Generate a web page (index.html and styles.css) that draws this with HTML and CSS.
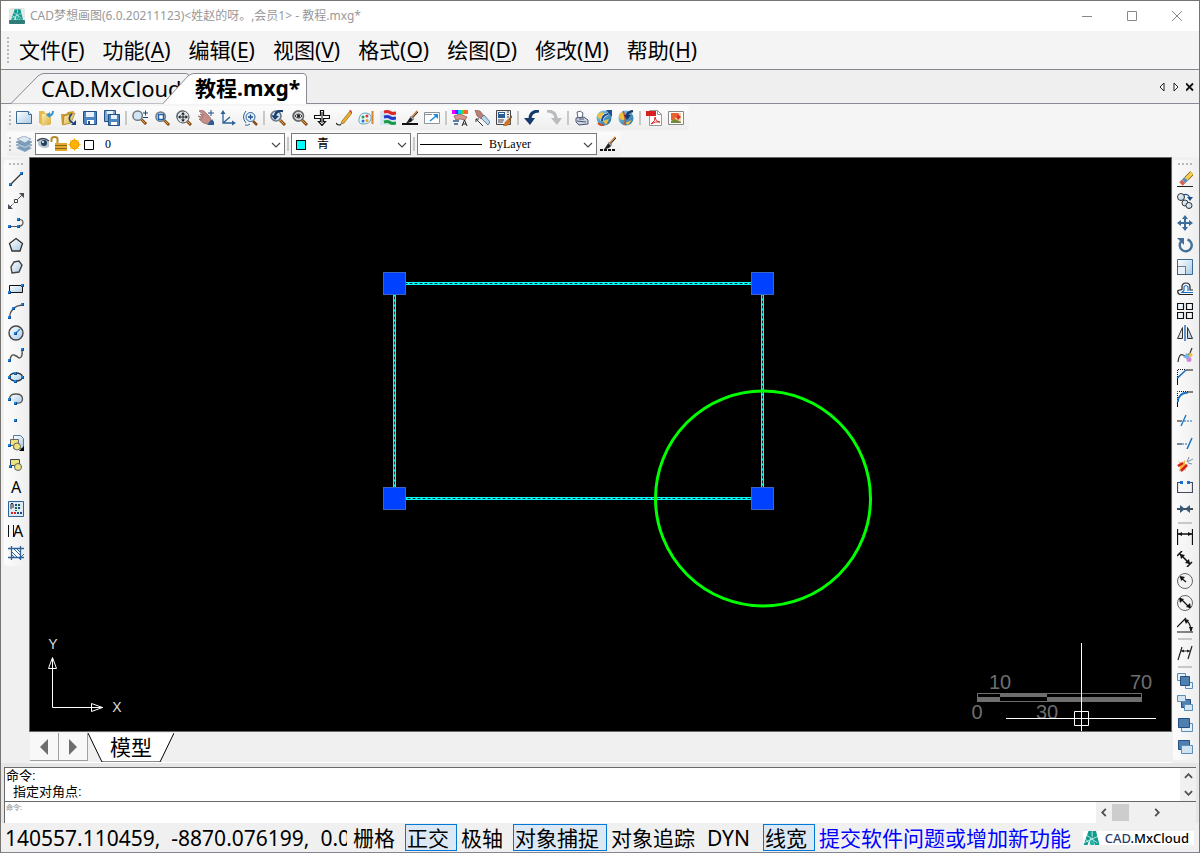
FILE: index.html
```html
<!DOCTYPE html>
<html lang="zh-CN">
<head>
    <meta charset="UTF-8">
    <meta name="viewport" content="width=device-width, initial-scale=1.0">
    <title>CAD梦想画图</title>
    <link rel="stylesheet" href="styles.css">
</head>
<body>
    <!-- shared shapes and gradients -->
    <svg class="sprite" aria-hidden="true">
        <defs>
            <linearGradient id="sky" x1="0" y1="0" x2="1" y2="1">
                <stop offset="0" stop-color="#ffffff"/>
                <stop offset="1" stop-color="#a9cbe6"/>
            </linearGradient>
            <linearGradient id="globe" x1="0" y1="0" x2="1" y2="1">
                <stop offset="0" stop-color="#8fd0ee"/>
                <stop offset="1" stop-color="#1c6a9c"/>
            </linearGradient>
            <linearGradient id="gold" x1="0" y1="0" x2="1" y2="1">
                <stop offset="0" stop-color="#fdf0b0"/>
                <stop offset="1" stop-color="#d9a93c"/>
            </linearGradient>
        </defs>
        <symbol id="lens" viewBox="0 0 16 16">
            <path d="M10 10l5 5" stroke="#8a4b14" stroke-width="3"/>
            <path d="M10 10l4 4" stroke="#e0a050" stroke-width="1"/>
            <circle cx="6" cy="6" r="5" fill="#d3e4f2" stroke="#6c7884" stroke-width="1.6"/>
        </symbol>
        <symbol id="brush" viewBox="0 0 16 16">
            <path d="M15.500 1L10 7" stroke="#c98a4c" stroke-width="2"/>
            <path d="M16 2L10.500 8" stroke="#222" stroke-width="1"/>
            <path d="M9 6l3 3-3 3-5 1.500z" fill="#222"/>
            <path d="M8.500 6.500l3 3" stroke="#aaa" stroke-width="1.500"/>
        </symbol>
        <symbol id="dot" viewBox="0 0 3 3">
            <rect width="3" height="3" fill="#0a4f98"/>
            <rect width="2" height="2" fill="#1b87e0"/>
        </symbol>
        <symbol id="logo" viewBox="0 0 16 14">
            <path d="M5 0h3.500l-1 6-3.500 8H0z" fill="#0e9c8f"/>
            <path d="M9 0h3.500L16 14h-4.500L9 7z" fill="#0e9c8f"/>
            <path d="M8 2l3 12H6z" fill="#26b3a4"/>
            <path d="M0 12L15 5M3 4l11 8M2 8l5 6" fill="none" stroke="#fff" stroke-width=".7"/>
        </symbol>
        <symbol id="chevron" viewBox="0 0 10 6">
            <path d="M1 1l4 4 4-4" fill="none" stroke="#444" stroke-width="1.100"/>
        </symbol>
    </svg>

    <div class="window">
        <header class="titlebar">
            <svg class="app-icon" viewBox="0 0 16 16">
                <rect width="16" height="16" rx="2" fill="#e3e7e6"/>
                <rect y="12" width="16" height="4" rx="1" fill="#2f7d78"/>
                <use href="#logo" x="2" y="1" width="12" height="11"/>
            </svg>
            <h1>CAD梦想画图(6.0.20211123)&lt;姓赵的呀。,会员1&gt; - 教程.mxg*</h1>
            <div class="win-buttons">
                <button aria-label="最小化"><svg viewBox="0 0 12 12"><path d="M1 6.500h10"/></svg></button>
                <button aria-label="最大化"><svg viewBox="0 0 12 12"><path d="M1.500 1.500h9v9h-9z"/></svg></button>
                <button aria-label="关闭"><svg viewBox="0 0 12 12"><path d="M1 1l10 10M11 1L1 11"/></svg></button>
            </div>
        </header>

        <nav class="menubar">
            <span class="grip grip-tall"></span>
            <button>文件(<u>F</u>)</button>
            <button>功能(<u>A</u>)</button>
            <button>编辑(<u>E</u>)</button>
            <button>视图(<u>V</u>)</button>
            <button>格式(<u>O</u>)</button>
            <button>绘图(<u>D</u>)</button>
            <button>修改(<u>M</u>)</button>
            <button>帮助(<u>H</u>)</button>
        </nav>

        <div class="tabs">
            <button class="tab tab-cloud">
                <svg viewBox="0 0 178 34"><path d="M0 33.500L27 6q3-2.500 6-2.500h142q3 0 3 3v27" fill="#f3f3f3" stroke="#8a8a94"/></svg>
                <span>CAD.MxCloud</span>
            </button>
            <button class="tab tab-active">
                <svg viewBox="0 0 144 34"><path d="M0 33.500L25 6q3-2.500 6-2.500h109q3 0 3.500 3v27" fill="#fff" stroke="#8a8a94"/><path d="M1 33.500h142" stroke="#fff"/></svg>
                <span>教程.mxg*</span>
            </button>
            <div class="tab-nav">
                <button aria-label="上一个"><svg viewBox="0 0 8 10"><path d="M6 1L2 5l4 4z" fill="#fff" stroke="#222"/></svg></button>
                <button aria-label="下一个"><svg viewBox="0 0 8 10"><path d="M2 1l4 4-4 4z" fill="#fff" stroke="#222"/></svg></button>
                <button aria-label="关闭标签"><svg viewBox="0 0 8 10"><path d="M0 1.500l7 7M7 1.500l-7 7" stroke="#111" stroke-width="1.800"/></svg></button>
            </div>
        </div>

        <div class="toolbars">
            <div class="toolbar">
                <span class="grip"></span>
                <button class="tool" aria-label="新建"><svg viewBox="0 0 16 16"><path d="M.500 1.500h12l3 3v9H.500z" fill="url(#sky)" stroke="#3c6a92"/><path d="M12.500 1.500v3h3" fill="#fff" stroke="#3c6a92"/></svg></button>
                <button class="tool" aria-label="打开"><svg viewBox="0 0 16 16"><path d="M1 1h5l1 2h5v12H4l-3-2z" fill="#e9b94e"/><path d="M4 4l9-1v11l-9 2z" fill="url(#gold)"/><path d="M15 1q0 4-4 5" fill="none" stroke="#2e9adf" stroke-width="2"/><path d="M8 5l4-3v6z" fill="#2e9adf"/></svg></button>
                <button class="tool" aria-label="打开云图"><svg viewBox="0 0 16 16"><path d="M1 4h5l2-2 6-1-3 12-9 2z" fill="#c99a2e"/><path d="M4 6l11-3-4 10-8 2z" fill="url(#gold)" stroke="#9b7420" stroke-width=".6"/><path d="M12 4q-4 3-2 7l3 2" fill="none" stroke="#1e4478" stroke-width="1.600"/><path d="M11 15h5v-5z" fill="#1e4478"/></svg></button>
                <button class="tool" aria-label="保存"><svg viewBox="0 0 16 16"><path d="M1.500 1.500h13v13h-12l-1-1z" fill="#4c86c0" stroke="#234f86"/><path d="M4 2h8v5H4z" fill="#e8f1f9"/><path d="M5 10h7v4H5z" fill="#fff"/><path d="M6 11h2v3H6z" fill="#234f86"/></svg></button>
                <button class="tool" aria-label="另存为"><svg viewBox="0 0 16 16"><path d="M.500.500h11v11H.500z" fill="#7ea8d2" stroke="#234f86"/><path d="M3 1h6v3H3z" fill="#e8f1f9"/><path d="M4.500 4.500h11v11h-11z" fill="#4c86c0" stroke="#234f86"/><path d="M7 5h6v4H7z" fill="#e8f1f9"/><path d="M7 12h6v3H7z" fill="#fff"/></svg></button>
                <span class="sep"></span>
                <button class="tool" aria-label="缩放"><svg viewBox="0 0 16 16"><use href="#lens" width="15" height="15"/><path d="M11 3h5M13.500.500v5M11 7.500h5" stroke="#1e4478"/></svg></button>
                <button class="tool" aria-label="窗口缩放"><svg viewBox="0 0 16 16"><use href="#lens" x="1" y="1" width="15" height="15"/><path d="M4.500 4.500h5v5h-5z" fill="#fff" stroke="#1f5fa8" stroke-width="1.500"/></svg></button>
                <button class="tool" aria-label="范围缩放"><svg viewBox="0 0 16 16"><use href="#lens" width="16" height="16"/><circle cx="7" cy="7" r="6" fill="#e3e8ec" stroke="#555"/><path d="M7 2l2 2.500H5zM7 12l2-2.500H5zM2 7l2.500-2v4zM12 7L9.500 5v4z" fill="#222"/><path d="M7 3v8M3 7h8" stroke="#222"/></svg></button>
                <button class="tool" aria-label="平移"><svg viewBox="0 0 16 16"><path d="M1 1l5 4-4-1 3 3-5-1 4 3-3 0q4 5 8 5l4-3q0-4-3-6l-4-4-3-1z" fill="#c58d8a" stroke="#8a5a5a" stroke-width=".6"/><path d="M9 15l5-6 2 3v3z" fill="#2d5c92"/><path d="M13 0v6M10 3h6" stroke="#234f86"/></svg></button>
                <button class="tool" aria-label="坐标系"><svg viewBox="0 0 16 16"><path d="M3 2v11h11M3 13l7-6" fill="none" stroke="#2d6399" stroke-width="1.300"/><path d="M3 0l2.500 4h-5zM16 13l-4 2.500v-5z" fill="#2d6399"/></svg></button>
                <button class="tool" aria-label="实时缩放"><svg viewBox="0 0 16 16"><path d="M11 11l4 4" stroke="#8a4b14" stroke-width="2.500"/><circle cx="8.500" cy="7" r="4.500" fill="#e4f0fa" stroke="#2d6399"/><path d="M6 7h5M8.500 4.500v5" stroke="#234f86" stroke-width="1.300"/><path d="M4 1q-5 6 0 12M3 15q3 1 5-1" fill="none" stroke="#2d6399"/></svg></button>
                <span class="sep"></span>
                <button class="tool" aria-label="上一视图"><svg viewBox="0 0 16 16"><use href="#lens" width="16" height="16"/><path d="M13 1q-7-1-8 5" fill="none" stroke="#1e3f70" stroke-width="2.500"/><path d="M1 5l8 1-4 4z" fill="#1e3f70"/></svg></button>
                <button class="tool" aria-label="查看"><svg viewBox="0 0 16 16"><use href="#lens" width="16" height="16"/><circle cx="6.500" cy="6" r="5" fill="#d9dcdd" stroke="#666" stroke-width="1.500"/><path d="M3 6q3.500-4 7 0-3.500 4-7 0z" fill="#fff" stroke="#333"/><circle cx="6.500" cy="6" r="1.500" fill="#111"/></svg></button>
                <button class="tool" aria-label="移动视图"><svg viewBox="0 0 16 16"><path d="M6.500.500h3v5h6v3h-6v3h2l-3.500 4-3.500-4h2v-3h-6v-3h6z" fill="#fff" stroke="#111" stroke-width="1.200"/><path d="M8 2v11" stroke="#111"/></svg></button>
                <button class="tool" aria-label="草图"><svg viewBox="0 0 16 16"><path d="M0 13q2 3 5 1.500" fill="none" stroke="#222" stroke-width="1.200"/><path d="M14 1l2 2-8 10-3 1 1-3z" fill="#edb02f" stroke="#8c5d12" stroke-width=".7"/><path d="M14 0l2 3" stroke="#c44" stroke-width="1.500"/></svg></button>
                <button class="tool" aria-label="调色板"><svg viewBox="0 0 16 16"><path d="M7 3q7 0 6 6-1 5-8 5-5 0-4-5 1-6 6-6z" fill="#e9f5fc" stroke="#5ba7cf"/><circle cx="5" cy="7" r="1.500" fill="#2c9c44"/><circle cx="9" cy="6" r="1.500" fill="#e03030"/><circle cx="5" cy="11" r="1.500" fill="#2b6fd1"/><circle cx="9" cy="10.500" r="1.500" fill="#e7a321"/><path d="M14.500 1v13" stroke="#d9822c" stroke-width="2"/></svg></button>
                <button class="tool" aria-label="图层颜色"><svg viewBox="0 0 16 16"><path d="M0 1h16v14H0z" fill="#d5e6f2"/><path d="M4 2q4-1 6 .500t6 .500" fill="none" stroke="#e02525" stroke-width="3"/><path d="M4 7q4-1 6 .500t6 .500" fill="none" stroke="#2438c4" stroke-width="3"/><path d="M4 12q4-1 6 .500t6 .500" fill="none" stroke="#189a46" stroke-width="3"/></svg></button>
                <button class="tool" aria-label="画笔"><svg viewBox="0 0 16 16"><use href="#brush" width="16" height="16"/><path d="M0 14h16" stroke="#111" stroke-width="2"/></svg></button>
                <button class="tool" aria-label="全屏"><svg viewBox="0 0 16 16"><path d="M.500 2.500h15v11H.500z" fill="#fff" stroke="#8e9499"/><path d="M0 4.500h8" stroke="#8e9499"/><path d="M6 11l6-5" stroke="#1b8be0" stroke-width="1.500"/><path d="M14 4v5L9 4z" fill="#1b8be0"/></svg></button>
                <span class="sep"></span>
                <button class="tool" aria-label="颜色拾取"><svg viewBox="0 0 16 16"><path d="M0 0h3v4H0z" fill="#e0f"/><path d="M3 0h3v4H3z" fill="#33f"/><path d="M6 0h3v4H6z" fill="#0cf"/><path d="M9 0h3v4H9z" fill="#4d2"/><path d="M12 0h4v4h-4z" fill="#f62"/><path d="M2 6l6-2 7 3-2 3-5-1-4 1z" fill="#d49a90" stroke="#8a5047" stroke-width=".7"/><path d="M1 10h6v2H1zM2 13h4v2H2z" fill="#5c7ea4"/><path d="M10 16l2.500-6L15 16M11 14h3" fill="none" stroke="#222"/></svg></button>
                <button class="tool" aria-label="编辑文字"><svg viewBox="0 0 16 16"><path d="M1 0l5 1 4 5-3 3-4-3z" fill="#b98078" stroke="#7a4b45" stroke-width=".6"/><path d="M7 8l3-3 6 7-2 3z" fill="#bcd8ee" stroke="#44688c" stroke-width=".8"/><path d="M2 9l7 7M2 9h3M2 9v3" fill="none" stroke="#333"/></svg></button>
                <button class="tool" aria-label="特性"><svg viewBox="0 0 16 16"><path d="M.500.500h14v14H.500z" fill="#eee" stroke="#444"/><path d="M2 2h7v6H2z" fill="#2c5c94"/><path d="M3 3h5v1H3z" fill="#fff"/><path d="M11 2h2M11 4.500h2M11 7h2M2 10h6M2 12h5" stroke="#445"/><path d="M16 6l-4 5" stroke="#9a5b22" stroke-width="2"/><path d="M12 9l3 3-4 4H7q2-5 5-7z" fill="#c6752c"/></svg></button>
                <span class="sep"></span>
                <button class="tool" aria-label="撤销"><svg viewBox="0 0 16 16"><path d="M15 1Q6 1 6 9" fill="none" stroke="#173a6c" stroke-width="3"/><path d="M0 8h11l-5 7z" fill="#173a6c"/></svg></button>
                <button class="tool" aria-label="重做"><svg viewBox="0 0 16 16"><path d="M1 1q9 0 9 8" fill="none" stroke="#b9bcbf" stroke-width="3"/><path d="M16 8H5l6 7z" fill="#b9bcbf"/></svg></button>
                <span class="sep"></span>
                <button class="tool" aria-label="打印"><svg viewBox="0 0 16 16"><path d="M3 2q4-2 6 1l-1 5H4z" fill="#fff" stroke="#59627f"/><path d="M2 8l8-1 4 3v4l-9 1-3-3z" fill="#ccd2e2" stroke="#4c5673"/><path d="M3 11l9 1M5 9h5" stroke="#4c5673"/></svg></button>
                <button class="tool" aria-label="上传"><svg viewBox="0 0 16 16"><circle cx="8" cy="8" r="7.500" fill="url(#globe)"/><path d="M1 5q5-5 7-1T3 9zM7 11l6-2-3 6z" fill="#f0c040"/><path d="M2 13q3 3 6 2" stroke="#d34b2a" stroke-width="2" fill="none"/><path d="M6 11q0-6 6-7" fill="none" stroke="#fff" stroke-width="3"/><path d="M6 11q0-6 6-7" fill="none" stroke="#1d4c8a" stroke-width="2"/><path d="M10 0h6v7z" fill="#1d4c8a"/></svg></button>
                <button class="tool" aria-label="下载"><svg viewBox="0 0 16 16"><circle cx="8" cy="8" r="7.500" fill="url(#globe)"/><path d="M1 4q5-4 6 2T2 9zM7 13l7-3-4 5z" fill="#f0c040"/><path d="M5 1q3 6 2 14" stroke="#d34b2a" stroke-width="1.500" fill="none"/><path d="M15 1q-6 1-6 5" fill="none" stroke="#173a6c" stroke-width="2.500"/><path d="M6 5h7l-4 5z" fill="#173a6c"/></svg></button>
                <span class="sep"></span>
                <button class="tool" aria-label="导出PDF"><svg viewBox="0 0 16 16"><path d="M3.500.500h8l4 4v11h-12z" fill="#fff" stroke="#999"/><path d="M11.500.500v4h4" fill="none" stroke="#999"/><path d="M0 1h10v5H0z" fill="#d92020"/><path d="M5 14q5-3 4-7 1 5 5 5-5-1-9 2z" fill="none" stroke="#d92020"/></svg></button>
                <button class="tool" aria-label="导出图片"><svg viewBox="0 0 16 16"><path d="M.500 1.500h15v13H.500z" fill="#fff" stroke="#888"/><path d="M3 3h10v10H3z" fill="#f8cf9e"/><path d="M3 3h8l-5 7H3z" fill="#e8642c"/><path d="M10 4l3 3-3 3-2-3z" fill="#d92f2f"/><path d="M3 11l4-2 6 3v1H3z" fill="#6f8a3c"/></svg></button>
            </div>

            <div class="toolbar">
                <span class="grip"></span>
                <button class="tool" aria-label="图层"><svg viewBox="0 0 16 16"><path d="M0 12l8-3 8 3-7 4z" fill="#7f9fbd"/><path d="M0 9l8-3 8 3-7 4z" fill="#a6bfd6" stroke="#54789a" stroke-width=".5"/><path d="M0 6l8-3 8 3-7 4z" fill="#7f9fbd" stroke="#54789a" stroke-width=".5"/><path d="M1 3l7-3 7 3-6 4z" fill="#dbe7f1" stroke="#54789a" stroke-width=".5"/></svg></button>
                <div class="combo combo-layer">
                    <select aria-label="当前图层"><option>0</option></select>
                    <svg class="combo-icon" viewBox="0 0 58 16">
                        <path d="M1 4q6-3 11 1v6q-6 3-11-2z" fill="#b7c5d2"/>
                        <path d="M0 5q6-5 12 0" fill="none" stroke="#3d4b59" stroke-width="1.500"/>
                        <circle cx="7" cy="7" r="3" fill="#23405e"/><circle cx="6" cy="6" r="1" fill="#fff"/>
                        <path d="M14.500 6V3q0-2 3-2t3 2v6" fill="none" stroke="#b38a2a" stroke-width="2"/>
                        <path d="M18 7h12v8H18z" fill="#e0a92e"/><path d="M18 9.500h12M18 12.500h12" stroke="#8d6717"/>
                        <path d="M37.500 2v13M31 8.500h13M33 4l9 9M42 4l-9 9" stroke="#f7d548"/>
                        <circle cx="37.500" cy="8.500" r="4.500" fill="#ffb400" stroke="#f08c00"/>
                        <path d="M47.500 4.500h9v9h-9z" fill="#fff" stroke="#000"/>
                    </svg>
                    <svg class="combo-arrow" viewBox="0 0 10 6"><use href="#chevron"/></svg>
                </div>
                <span class="sep"></span>
                <div class="combo combo-color">
                    <select aria-label="颜色"><option>青</option></select>
                    <span class="swatch"></span>
                    <svg class="combo-arrow" viewBox="0 0 10 6"><use href="#chevron"/></svg>
                </div>
                <span class="sep"></span>
                <div class="combo combo-line">
                    <select aria-label="线型"><option>ByLayer</option></select>
                    <span class="line-sample"></span>
                    <svg class="combo-arrow" viewBox="0 0 10 6"><use href="#chevron"/></svg>
                </div>
                <button class="tool" aria-label="线型管理"><svg viewBox="0 0 16 16"><use href="#brush" width="16" height="16"/><path d="M0 14h16" stroke="#111" stroke-width="2" stroke-dasharray="3 1"/></svg></button>
            </div>
        </div>

        <main class="workspace">
            <aside class="dock dock-left">
                <div class="palette">
                    <span class="grip grip-flat"></span>
                    <button class="tool" aria-label="直线"><svg viewBox="0 0 16 16"><path d="M3 13L14 2" stroke="#333" stroke-width="1.300"/><use href="#dot" x="1" y="12" width="3" height="3"/><use href="#dot" x="12" y="1" width="3" height="3"/></svg></button>
                    <button class="tool" aria-label="构造线"><svg viewBox="0 0 16 16"><path d="M1 15L15 1" stroke="#444" stroke-dasharray="5 1.500"/><path d="M0 16v-5l5 5zM16 0v5l-5-5z" fill="#4a4a58"/><path d="M6.500 6.500h3v3h-3z" fill="#fff" stroke="#444"/></svg></button>
                    <button class="tool" aria-label="多段线"><svg viewBox="0 0 16 16"><path d="M1 11.500h10q4-1 4-4t-4-3" fill="none" stroke="#555" stroke-width="1.200"/><use href="#dot" x="0" y="10" width="3" height="3"/><use href="#dot" x="9" y="10" width="3" height="3"/><use href="#dot" x="9" y="3" width="3" height="3"/></svg></button>
                    <button class="tool" aria-label="正多边形"><svg viewBox="0 0 16 16"><path d="M8 1.500l6.500 5-2.500 7.500H4L1.500 6.500z" fill="url(#sky)" stroke="#333" stroke-width="1.300"/></svg></button>
                    <button class="tool" aria-label="多边形"><svg viewBox="0 0 16 16"><path d="M6 3l5-1 3 4-3 7-7 1-1-6z" fill="url(#sky)" stroke="#444" stroke-width="1.400"/></svg></button>
                    <button class="tool" aria-label="矩形"><svg viewBox="0 0 16 16"><path d="M1.500 4.500h13v7h-13z" fill="url(#sky)" stroke="#111"/><use href="#dot" x="0" y="10" width="3" height="3"/><use href="#dot" x="13" y="3" width="3" height="3"/></svg></button>
                    <button class="tool" aria-label="圆弧"><svg viewBox="0 0 16 16"><path d="M1.500 14Q3 3 14 2" fill="none" stroke="#555" stroke-width="1.300"/><use href="#dot" x="0" y="13" width="3" height="3"/><use href="#dot" x="4" y="4" width="3" height="3"/><use href="#dot" x="13" y="0" width="3" height="3"/></svg></button>
                    <button class="tool" aria-label="圆"><svg viewBox="0 0 16 16"><circle cx="8" cy="8" r="7" fill="url(#sky)" stroke="#444" stroke-width="1.400"/><path d="M8 8l4-4" stroke="#1b87e0" stroke-width="1.200"/><use href="#dot" x="6" y="7" width="3" height="3"/></svg></button>
                    <button class="tool" aria-label="样条曲线"><svg viewBox="0 0 16 16"><path d="M2 13q1-6 4-5t5 3q4 0 3-8" fill="none" stroke="#555" stroke-width="1.400"/><use href="#dot" x="0" y="12" width="3" height="3"/><use href="#dot" x="13" y="1" width="3" height="3"/></svg></button>
                    <button class="tool" aria-label="椭圆"><svg viewBox="0 0 16 16"><ellipse cx="8" cy="8" rx="6.500" ry="4" fill="url(#sky)" stroke="#333" stroke-width="1.300"/><use href="#dot" x="0" y="7" width="3" height="3"/><use href="#dot" x="13" y="7" width="3" height="3"/><use href="#dot" x="6" y="3" width="3" height="3"/><use href="#dot" x="6" y="11" width="3" height="3"/></svg></button>
                    <button class="tool" aria-label="椭圆弧"><svg viewBox="0 0 16 16"><path d="M1.500 8q0-5 6.500-5t6.500 5-6.500 4" fill="url(#sky)" stroke="#555" stroke-width="1.300"/><use href="#dot" x="0" y="7" width="3" height="3"/><use href="#dot" x="6" y="11" width="3" height="3"/></svg></button>
                    <button class="tool" aria-label="点"><svg viewBox="0 0 16 16"><use href="#dot" x="6" y="6" width="3" height="3"/></svg></button>
                    <button class="tool" aria-label="插入块"><svg viewBox="0 0 16 16"><path d="M5.500.500h7l3 3v10h-10z" fill="url(#sky)" stroke="#4f7aa3"/><path d="M2.500 4.500h8v6h-8z" fill="#efe27b" stroke="#666"/><circle cx="9" cy="11.500" r="3.500" fill="#efe27b" stroke="#666"/><use href="#dot" x="0" y="9" width="3" height="3"/><path d="M16 11v5h-5z" fill="#000"/></svg></button>
                    <button class="tool" aria-label="创建块"><svg viewBox="0 0 16 16"><path d="M2.500 2.500h9v6h-9z" fill="#efe27b" stroke="#345"/><circle cx="10" cy="10" r="3.500" fill="#efe27b" stroke="#567"/><use href="#dot" x="1" y="8" width="3" height="3"/></svg></button>
                    <button class="tool glyph" aria-label="单行文字">A</button>
                    <button class="tool" aria-label="图案"><svg viewBox="0 0 16 16"><path d="M.500.500h15v15H.500z" fill="#dceaf7" stroke="#2d6399"/><path d="M3 8V3q1-2 2 0v4" fill="none" stroke="#222"/><path d="M3 11h2v2H3zM6 11h2v2H6z" fill="#d22"/><path d="M7 3h2v2H7zM10 6h2v2h-2zM9 11h2v2H9zM12 11h2v2h-2z" fill="#248"/><path d="M7 6h2v2H7zM10 3h2v2h-2zM7 9h2v1H7z" fill="#186a2c"/></svg></button>
                    <button class="tool glyph glyph-bar" aria-label="多行文字">A</button>
                    <button class="tool" aria-label="填充"><svg viewBox="0 0 16 16"><path d="M4 4h9v9H4z" fill="#fff"/><path d="M4 7l6 6M4 10l3 3M6 4l7 7M9 4l4 4" stroke="#2d6399"/><path d="M3.500 1v14M12.500 1v14M0 3.500h16M0 12.500h16" stroke="#2d6399" stroke-width="1.300"/><path d="M16 9l-5 5" stroke="#2d6399"/></svg></button>
                </div>
            </aside>

            <section class="stage">
                <div class="canvas">
                    <svg class="drawing">
                        <g transform="translate(-30 -158)">
                            <path class="edge" d="M394.500 283.500h368v215h-368z"/>
                            <path class="edge-dash" d="M394.500 283.500h368v215h-368z"/>
                            <circle class="ring" cx="763" cy="498.500" r="107.500"/>
                            <g class="handle">
                                <rect x="383.500" y="272.500" width="22" height="22"/>
                                <rect x="751.500" y="272.500" width="22" height="22"/>
                                <rect x="383.500" y="487.500" width="22" height="22"/>
                                <rect x="751.500" y="487.500" width="22" height="22"/>
                            </g>
                            <g class="axis">
                                <path d="M52.500 658v49.500H103M48.500 668.500l4-11 4 11zM91.500 703.500l11 4-11 4z"/>
                                <text x="53" y="649">Y</text>
                                <text x="117" y="712">X</text>
                            </g>
                            <g class="scale">
                                <rect x="977.500" y="693.500" width="164" height="8"/>
                                <path d="M977 697h23v5h-23zM1000 693h47v4h-47zM1047 697h95v5h-95z"/>
                                <text x="1000" y="689">10</text>
                                <text x="1141" y="689">70</text>
                                <text x="977" y="719">0</text>
                                <text x="1047" y="719">30</text>
                            </g>
                            <path class="cursor" d="M1081.500 643v88M1006 718.500h150M1074.500 711.500h14v14h-14z"/>
                        </g>
                    </svg>
                </div>
                <div class="sheets">
                    <button class="sheet-nav" aria-label="上一页"><svg viewBox="0 0 8 16"><path d="M8 0v16L0 8z" fill="#6d6d6d"/></svg></button>
                    <button class="sheet-nav" aria-label="下一页"><svg viewBox="0 0 8 16"><path d="M0 0v16l8-8z" fill="#6d6d6d"/></svg></button>
                    <button class="sheet">
                        <svg viewBox="0 0 86 30"><path d="M0 0h86L72 28.500H14z" fill="#fff"/><path d="M14 28.500h58" stroke="#888"/><path d="M0 0l14 29M86 0L72 29" stroke="#000"/></svg>
                        <span>模型</span>
                    </button>
                </div>
            </section>

            <aside class="dock dock-right">
                <div class="palette">
                    <span class="grip grip-flat"></span>
                    <button class="tool" aria-label="删除"><svg viewBox="0 0 16 16"><path d="M0 15.500h16" stroke="#222"/><path d="M15 2L9 8" stroke="#7a5b12" stroke-width="5"/><path d="M15 2L9 8" stroke="#f5cf4c" stroke-width="3.500"/><path d="M9 8l-2.500 2.500" stroke="#5f8dbd" stroke-width="5"/><path d="M6.500 10.500L4 13" stroke="#d9604f" stroke-width="5"/></svg></button>
                    <button class="tool" aria-label="复制"><svg viewBox="0 0 16 16"><circle cx="4" cy="4" r="3.500" fill="url(#sky)" stroke="#333"/><circle cx="8" cy="10" r="3" fill="url(#sky)" stroke="#333"/><circle cx="12" cy="12.500" r="3" fill="url(#sky)" stroke="#333"/><path d="M6 2q5-2 7 3" fill="none" stroke="#1e4f8c" stroke-width="1.300"/><path d="M10 4h6l-3 4z" fill="#1e4f8c"/></svg></button>
                    <button class="tool" aria-label="移动"><svg viewBox="0 0 16 16"><path d="M8 2v12M2 8h12" stroke="#3d6d9c" stroke-width="2"/><path d="M8 0l3 4H5zM8 16l3-4H5zM0 8l4-3v6zM16 8l-4-3v6z" fill="#3d6d9c"/></svg></button>
                    <button class="tool" aria-label="旋转"><svg viewBox="0 0 16 16"><path d="M4.500 4a6 6 0 1 0 6-1.500" fill="none" stroke="#44709a" stroke-width="2.400"/><path d="M0 1h7v7z" fill="#44709a"/></svg></button>
                    <button class="tool" aria-label="缩放对象"><svg viewBox="0 0 16 16"><path d="M.500.500h15v15H.500z" fill="url(#sky)" stroke="#3c6a92"/><path d="M.500 7.500h8v8h-8z" fill="#e6f0f8" stroke="#111" stroke-dasharray="1 1"/></svg></button>
                    <button class="tool" aria-label="偏移"><svg viewBox="0 0 16 16"><path d="M16 13.500H3q-3-1-2-4l4-1V6q0-4 4-4t4 4v3h3" fill="#f4f9fd" stroke="#222" stroke-width="1.200"/><path d="M16 11.500H5l2-2V6q2-3 4 0v4" fill="none" stroke="#1b6fc0" stroke-width="1.200"/></svg></button>
                    <button class="tool" aria-label="阵列"><svg viewBox="0 0 16 16"><path d="M.500.500h6v6h-6zM9.500.500h6v6h-6zM.500 9.500h6v6h-6zM9.500 9.500h6v6h-6z" fill="#eef6fc" stroke="#111" stroke-width="1.200"/></svg></button>
                    <button class="tool" aria-label="镜像"><svg viewBox="0 0 16 16"><path d="M5.500 2.500v11H.500zM10.500 2.500v11h5z" fill="url(#sky)" stroke="#333"/><path d="M8 0v16" stroke="#2468b0" stroke-width="1.400"/></svg></button>
                    <button class="tool" aria-label="编辑曲线"><svg viewBox="0 0 16 16"><path d="M1 15q1-9 5-7t7-2l2-5" fill="none" stroke="#333" stroke-width="1.200"/><path d="M6 10l4-4 3 4-3 2z" fill="#6fb4e4"/><circle cx="13.500" cy="8" r="2" fill="#eebf3e"/><circle cx="12" cy="12.500" r="2.500" fill="#c98ad6"/></svg></button>
                    <button class="tool" aria-label="倒角"><svg viewBox="0 0 16 16"><path d="M.500 8V.500H9" fill="none" stroke="#111" stroke-dasharray="1 1"/><path d="M.500 16V9M9 1h7" stroke="#111"/><path d="M.500 9L9 1" stroke="#1b6fc0" stroke-width="1.600"/></svg></button>
                    <button class="tool" aria-label="圆角"><svg viewBox="0 0 16 16"><path d="M.500 9V.500H11" fill="none" stroke="#111" stroke-dasharray="1 1"/><path d="M.500 16v-5M11 1h5" stroke="#111"/><path d="M1 11Q1 2 11 1.500" fill="none" stroke="#1b6fc0" stroke-width="1.800"/></svg></button>
                    <button class="tool" aria-label="修剪"><svg viewBox="0 0 16 16"><path d="M0 8h5" stroke="#111"/><path d="M7 8h9" stroke="#1b6fc0" stroke-dasharray="2 1"/><path d="M4 13l5-11" stroke="#1b6fc0" stroke-width="1.300"/></svg></button>
                    <button class="tool" aria-label="延伸"><svg viewBox="0 0 16 16"><path d="M0 9h5" stroke="#111"/><path d="M5 9h6" stroke="#1b6fc0" stroke-dasharray="2 1"/><path d="M10 14l5-11" stroke="#1b6fc0" stroke-width="1.500"/></svg></button>
                    <button class="tool" aria-label="分解"><svg viewBox="0 0 16 16"><path d="M1 4l4 2 3-3v4l3 1-3 2 1 4-3-2-4 3 1-5-3-2 3-1z" fill="#f6b83c"/><path d="M1 9l5-3M4 14l6-6" stroke="#d22020" stroke-width="2.500"/><path d="M10 5l2-5M10 5l6-3M11 6l4 1" stroke="#7891a8"/></svg></button>
                    <button class="tool" aria-label="打断"><svg viewBox="0 0 16 16"><path d="M4 3.500H.500v10h15v-10H12" fill="none" stroke="#444a5c" stroke-width="1.200"/><path d="M3 2h3v3H3zM10 2h3v3h-3z" fill="#1673d4"/></svg></button>
                    <button class="tool" aria-label="合并"><svg viewBox="0 0 16 16"><path d="M0 8h16" stroke="#111" stroke-width="1.500"/><path d="M3 4l5 4-5 4zM13 4L8 8l5 4z" fill="#35597c"/></svg></button>
                    <span class="sep"></span>
                    <button class="tool" aria-label="线性标注"><svg viewBox="0 0 16 16"><path d="M.500 0v16M15.500 0v16M1 5h14" stroke="#111" stroke-width="1.300"/><path d="M1 5l4-2v4zM15 5l-4-2v4z" fill="#111"/></svg></button>
                    <button class="tool" aria-label="对齐标注"><svg viewBox="0 0 16 16"><path d="M0 5l5-5M10 16l5-5M3 3l10 10" stroke="#111" stroke-width="1.500"/><path d="M3 3l5 1-4 4zM13 13l-5-1 4-4z" fill="#111"/></svg></button>
                    <button class="tool" aria-label="半径标注"><svg viewBox="0 0 16 16"><circle cx="8" cy="8" r="7.500" fill="#f3f3f3" stroke="#666"/><path d="M3 4l6 5" stroke="#111" stroke-width="1.300"/><path d="M3 3l5 1-4 4z" fill="#111"/></svg></button>
                    <button class="tool" aria-label="直径标注"><svg viewBox="0 0 16 16"><circle cx="8" cy="8" r="7.500" fill="#f3f3f3" stroke="#666"/><path d="M3 3l10 10" stroke="#111" stroke-width="1.300"/><path d="M2 3l5 1-4 4zM14 13l-5-1 4-4z" fill="#111"/></svg></button>
                    <button class="tool" aria-label="角度标注"><svg viewBox="0 0 16 16"><path d="M0 10l9-9M0 15h16M9 3q5 4 5 11" fill="none" stroke="#111" stroke-width="1.200"/><path d="M7 2l5 1-3 4zM12 10h4l-2 5z" fill="#111"/></svg></button>
                    <span class="sep"></span>
                    <button class="tool" aria-label="倾斜标注"><svg viewBox="0 0 16 16"><path d="M1 15L5 2M11 14l4-13M4 6h9" stroke="#222" stroke-width="1.200"/><path d="M4 6l3-1.500v3zM13 6l-3-1.500v3z" fill="#222"/></svg></button>
                    <span class="sep"></span>
                    <button class="tool" aria-label="前置"><svg viewBox="0 0 16 16"><path d="M.500.500h8v7h-8zM8.500 9.500h7v6h-7z" fill="#e4f0f8" stroke="#5d8db5"/><path d="M3.500 3.500h9v9h-9z" fill="#4f7fae" stroke="#234f86"/></svg></button>
                    <button class="tool" aria-label="后置"><svg viewBox="0 0 16 16"><path d="M4.500 4.500h9v8h-9z" fill="#4f7fae" stroke="#234f86"/><path d="M.500.500h8v6h-8zM7.500 9.500h8v6h-8z" fill="#d3e5f1" stroke="#5d8db5"/></svg></button>
                    <button class="tool" aria-label="置于对象之上"><svg viewBox="0 0 16 16"><path d="M4.500 6.500h11v8h-11z" fill="#e4f0f8" stroke="#5d8db5"/><path d="M1.500 1.500h11v9h-11z" fill="#4f7fae" stroke="#234f86"/></svg></button>
                    <button class="tool" aria-label="置于对象之下"><svg viewBox="0 0 16 16"><path d="M1.500 1.500h11v9h-11z" fill="#4f7fae" stroke="#234f86"/><path d="M4.500 6.500h11v8h-11z" fill="#cfe3f0" stroke="#5d8db5"/></svg></button>
                </div>
            </aside>
        </main>

        <section class="command">
            <div class="history">
                <div class="log">
                    <p>命令:</p>
                    <p class="log-step">指定对角点:</p>
                </div>
                <div class="vscroll">
                    <button aria-label="向上滚动"><svg viewBox="0 0 10 6"><path d="M1 5l4-4 4 4"/></svg></button>
                    <button aria-label="向下滚动"><svg viewBox="0 0 10 6"><path d="M1 1l4 4 4-4"/></svg></button>
                </div>
            </div>
            <div class="prompt">
                <input type="text" value="命令:" aria-label="命令输入">
                <div class="hscroll">
                    <button aria-label="向左滚动"><svg viewBox="0 0 6 10"><path d="M5 1L1 5l4 4"/></svg></button>
                    <span class="thumb"></span>
                    <button aria-label="向右滚动"><svg viewBox="0 0 6 10"><path d="M1 1l4 4-4 4"/></svg></button>
                </div>
            </div>
        </section>

        <footer class="statusbar">
            <output class="coords">140557.110459,  -8870.076199,  0.00</output>
            <button class="mode">栅格</button>
            <button class="mode mode-on">正交</button>
            <button class="mode">极轴</button>
            <button class="mode mode-on">对象捕捉</button>
            <button class="mode">对象追踪</button>
            <button class="mode mode-dyn">DYN</button>
            <button class="mode mode-on">线宽</button>
            <a class="feedback" href="#">提交软件问题或增加新功能</a>
            <div class="brand">
                <svg viewBox="0 0 16 14"><use href="#logo"/></svg>
                <span><span class="brand-cad">CAD</span>.MxCloud</span>
            </div>
        </footer>
    </div>
</body>
</html>
```

FILE: styles.css
```css
* {
    box-sizing: border-box;
}
body {
    margin: 0;
    background: #f0f0f0;
    color: #000;
    font-family: "Noto Sans", "Noto Sans CJK SC", sans-serif;
    font-size: 21px;
}
button {
    padding: 0;
    border: none;
    background: none;
    color: inherit;
    font: inherit;
}
.sprite {
    position: absolute;
    width: 0;
    height: 0;
}
.window {
    display: flex;
    flex-direction: column;
    min-height: 100vh;
    border: 1px solid #77736f;
    border-bottom: none;
}

/* title bar */
.titlebar {
    display: flex;
    align-items: center;
    height: 30px;
    padding-left: 8px;
    background: #fff;
}
.app-icon {
    width: 16px;
    height: 16px;
}
.titlebar h1 {
    flex: 1;
    margin: 0 0 0 5px;
    color: #999;
    font-size: 12px;
    font-weight: normal;
    line-height: 30px;
    white-space: nowrap;
}
.win-buttons {
    display: flex;
}
.win-buttons button {
    display: grid;
    place-items: center;
    width: 45px;
    height: 30px;
}
.win-buttons svg {
    width: 12px;
    height: 12px;
    fill: none;
    stroke: #888;
}

/* menu */
.menubar {
    display: flex;
    align-items: center;
    gap: 18px;
    height: 39px;
    padding-left: 6px;
    border-bottom: 1px solid #85858f;
    background: #f4f4f4;
    line-height: 30px;
    white-space: nowrap;
}
.menubar u {
    text-underline-offset: 3px;
    text-decoration-thickness: 1px;
}

/* dotted drag handles */
.grip {
    width: 2px;
    height: 15px;
    margin: 0 2px;
    background: repeating-linear-gradient(#b8b8b8 0 2px, transparent 2px 4px);
}
.menubar .grip {
    margin: 0 -8px 0 0;
}
.grip-tall {
    height: 26px;
}
.grip-flat {
    width: 14px;
    height: 2px;
    margin: 3px 0 3px 4px;
    background: repeating-linear-gradient(90deg, #b8b8b8 0 2px, transparent 2px 4px);
}
.sep {
    width: 2px;
    height: 14px;
    margin: 0 2px;
    background: #c8c8c8;
}

/* document tabs */
.tabs {
    display: flex;
    height: 34px;
    padding-left: 10px;
    border-bottom: 1px solid #8a8a94;
    background: #efefef;
}
.tab {
    position: relative;
    height: 34px;
    line-height: 36px;
    text-align: left;
    white-space: nowrap;
}
.tab svg {
    position: absolute;
    inset: 0;
    width: 100%;
    height: 100%;
}
.tab span {
    position: relative;
}
.tab-cloud {
    width: 178px;
    padding-left: 30px;
    font-size: 22px;
}
.tab-active {
    width: 144px;
    margin-left: -26px;
    padding-left: 32px;
    font-weight: bold;
}
.tab-nav {
    display: flex;
    align-items: center;
    gap: 6px;
    margin-left: auto;
    padding-right: 5px;
}
.tab-nav button {
    display: flex;
}
.tab-nav svg {
    width: 8px;
    height: 10px;
    fill: none;
}

/* toolbars */
.toolbars {
    display: flex;
    flex-direction: column;
    align-items: flex-start;
    gap: 2px;
    padding: 2px 0 1px 6px;
    background: #f5f5f5;
}
.toolbar {
    display: flex;
    align-items: center;
    height: 24px;
    padding-right: 2px;
    border-radius: 3px;
    background: linear-gradient(#fcfcfc, #eeeeee);
}
.tool {
    display: grid;
    place-items: center;
    width: 22px;
    height: 22px;
}
.tool svg {
    width: 16px;
    height: 16px;
}
.combo {
    position: relative;
    height: 22px;
}
.combo select {
    display: block;
    width: 100%;
    height: 22px;
    padding: 0;
    border: 1px solid #7a7a7a;
    border-radius: 0;
    background: #fff;
    color: #000;
    font: 12px "Liberation Serif", "Noto Sans CJK SC", serif;
    appearance: none;
}
.combo-layer {
    width: 250px;
}
.combo-layer select {
    padding-left: 69px;
}
.combo-color {
    width: 120px;
}
.combo-color select {
    padding-left: 25px;
}
.combo-line {
    width: 180px;
}
.combo-line select {
    padding-left: 71px;
}
.combo-icon {
    position: absolute;
    top: 3px;
    left: 2px;
    width: 58px;
    height: 16px;
}
.combo-arrow {
    position: absolute;
    top: 9px;
    right: 4px;
    width: 10px;
    height: 6px;
}
.swatch {
    position: absolute;
    top: 7px;
    left: 5px;
    width: 10px;
    height: 10px;
    border: 1px solid #000;
    background: #00ffff;
}
.line-sample {
    position: absolute;
    top: 11px;
    left: 3px;
    width: 62px;
    height: 1px;
    background: #000;
}

/* drawing area with docks */
.workspace {
    display: flex;
    flex: 1;
}
.dock {
    padding-top: 3px;
}
.dock-left {
    width: 28px;
    padding-left: 3px;
}
.dock-right {
    width: 27px;
    padding-left: 1px;
}
.palette {
    display: flex;
    flex-direction: column;
    padding: 0 1px 2px;
    border-radius: 3px;
    background: linear-gradient(90deg, #fcfcfc, #eeeeee);
}
.palette .sep {
    width: 14px;
    height: 2px;
    margin: 2px 4px;
}
.glyph {
    font-size: 16px;
    line-height: 22px;
}
.glyph-bar {
    grid-template-columns: 4px 11px;
    justify-content: center;
}
.glyph-bar::before {
    content: "";
    width: 4px;
    height: 12px;
    border: solid #111;
    border-width: 0 1px;
}
.stage {
    display: flex;
    flex: 1;
    flex-direction: column;
    min-width: 0;
}
.canvas {
    position: relative;
    flex: 1;
    border: 1px solid #696969;
    background: #000;
}
.drawing {
    position: absolute;
    inset: 0;
    width: 100%;
    height: 100%;
}
.edge {
    fill: none;
    stroke: #00ffff;
    stroke-width: 3;
}
.edge-dash {
    fill: none;
    stroke: #103030;
    stroke-dasharray: 3 2;
}
.ring {
    fill: none;
    stroke: #00ff00;
    stroke-width: 3;
}
.handle {
    fill: #0040ff;
    stroke: #3c64c8;
}
.axis path,
.cursor {
    fill: none;
    stroke: #fff;
}
.axis text {
    fill: #ddd;
    font: 14px "Liberation Sans", sans-serif;
    text-anchor: middle;
}
.scale rect {
    fill: none;
    stroke: #6e6e6e;
}
.scale path,
.scale text {
    fill: #6e6e6e;
}
.scale text {
    font: 20px "Liberation Sans", sans-serif;
    text-anchor: middle;
}
.sheets {
    display: flex;
    height: 31px;
    padding: 1px 0 1px 1px;
    border-bottom: 1px solid #fff;
}
.sheet-nav {
    display: grid;
    place-items: center;
    width: 29px;
    border: 1px solid #a0a0a0;
    border-width: 0 1px 1px 0;
    background: #f8f8f8;
}
.sheet-nav svg {
    width: 8px;
    height: 16px;
}
.sheet {
    position: relative;
    width: 86px;
    line-height: 29px;
}
.sheet svg {
    position: absolute;
    top: 0;
    left: 0;
    width: 86px;
    height: 30px;
}
.sheet span {
    position: relative;
}

/* command line */
.command {
    padding: 4px 3px 0;
    background: #e6e6e6;
}
.history {
    display: flex;
    height: 35px;
    border: solid #696969;
    border-width: 1px 0 1px 1px;
    background: #fff;
}
.log {
    flex: 1;
    padding-left: 1px;
    font-family: "Liberation Sans", "Noto Sans CJK SC", sans-serif;
    font-size: 13px;
    line-height: 16px;
}
.log p {
    margin: 0;
}
.log .log-step {
    margin-left: 7px;
}
.vscroll {
    display: flex;
    flex-direction: column;
    justify-content: space-around;
    width: 16px;
    background: #f0f0f0;
}
.vscroll button,
.hscroll button {
    display: grid;
    place-items: center;
    width: 16px;
}
.vscroll svg {
    width: 9px;
    height: 6px;
}
.vscroll svg,
.hscroll svg {
    fill: none;
    stroke: #505050;
    stroke-width: 2;
}
.prompt {
    display: flex;
    height: 21px;
    padding-right: 29px;
    background: #f0f0f0;
}
.prompt input {
    flex: 1;
    padding: 0 0 12px 1px;
    border: none;
    border-left: 1px solid #696969;
    background: #fff;
    color: #888;
    font: 7px "Noto Sans CJK SC", sans-serif;
}
.hscroll {
    display: flex;
    width: 71px;
    padding: 2px 0;
}
.hscroll svg {
    width: 6px;
    height: 9px;
}
.hscroll .thumb {
    width: 17px;
    margin-right: 20px;
    background: #cdcdcd;
}

/* status bar */
.statusbar {
    display: flex;
    align-items: center;
    gap: 2px;
    height: 30px;
    padding-left: 4px;
    border-bottom: 1px solid #85858f;
    background: #f0f0f0;
    line-height: 26px;
    white-space: nowrap;
}
.coords {
    flex: 0 0 342px;
    margin-right: 2px;
    overflow: hidden;
    white-space: pre;
}
.mode {
    height: 27px;
    padding: 0 7px 0 1px;
    border: 1px solid transparent;
    text-align: left;
}
.mode-on {
    border-color: #0078d7;
    background: #dce9f5;
}
.mode-dyn {
    width: 56px;
}
.feedback {
    margin-left: 2px;
    color: #0000ff;
    text-decoration: none;
}
.brand {
    display: flex;
    align-items: center;
    gap: 5px;
    height: 14px;
    margin: 0 5px 0 auto;
    padding: 0 5px 0 0;
    background: #fff;
    font-size: 13px;
    font-weight: 500;
    line-height: 14px;
}
.brand svg {
    width: 17px;
    height: 14px;
}
.brand-cad {
    color: #2d3f6b;
}
```
